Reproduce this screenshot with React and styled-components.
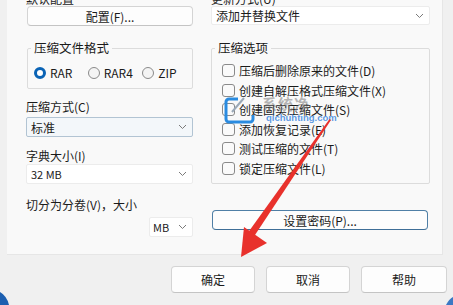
import React from "react";
import styled, { createGlobalStyle } from "styled-components";

const Global = createGlobalStyle`
  html, body { margin: 0; padding: 0; background: #f0f0f0; }
  body { font-family: "Noto Sans CJK SC", "Noto Sans", sans-serif; font-size: 12px; color: #1b1b1b; }
  * { box-sizing: border-box; }
`;

const Screen = styled.div`
  position: relative;
  width: 453px;
  height: 305px;
  overflow: hidden;
  background: #f0f0f0;
`;

const Panel = styled.div`
  margin-left: 7px;
  width: 436px;
  height: 255px;
  background: #f9f9f9;
  border-right: 1px solid #e6e6e6;
  border-bottom: 1px solid #e6e6e6;
  padding: 0 12px 0 19px;
  display: flex;
  gap: 18px;
`;

const Column = styled.div`
  width: ${(p) => p.$w}px;
  display: flex;
  flex-direction: column;
`;

const Label = styled.div`
  height: ${(p) => p.$h || 14}px;
  line-height: ${(p) => p.$h || 14}px;
  margin-top: ${(p) => p.$mt || 0}px;
  margin-left: ${(p) => p.$ml || 0}px;
  white-space: nowrap;
  font-size: 12px;
`;

const Button = styled.div`
  height: ${(p) => p.$h || 20}px;
  margin-top: ${(p) => p.$mt || 0}px;
  width: ${(p) => (p.$w ? p.$w + "px" : "auto")};
  background: #fdfdfd;
  border: 1px solid ${(p) => (p.$focus ? "#4f7fa6" : "#d4d4d4")};
  border-bottom-color: ${(p) => (p.$focus ? "#3f6f98" : "#c4c4c4")};
  border-radius: 4px;
  display: flex;
  align-items: center;
  justify-content: center;
  font-size: 12px;
  white-space: nowrap;
`;

const Select = styled.div`
  height: 20px;
  margin-top: ${(p) => p.$mt || 0}px;
  margin-left: ${(p) => p.$ml || 0}px;
  width: ${(p) => (p.$w ? p.$w + "px" : "auto")};
  background: ${(p) => (p.$hover ? "#f3f7fa" : "#ffffff")};
  border: 1px solid ${(p) => (p.$hover ? "#b2c4d3" : "#ececec")};
  border-radius: 2px;
  display: flex;
  align-items: center;
  justify-content: space-between;
  padding: 0 5px 0 ${(p) => (p.$pl ? p.$pl : 4)}px;
  font-size: ${(p) => (p.$small ? 11 : 12)}px;
  align-self: ${(p) => (p.$end ? "flex-end" : "stretch")};
`;

const Chevron = () => (
  <svg width="9" height="6" viewBox="0 0 9 6">
    <path d="M1 1 L4.5 4.5 L8 1" fill="none" stroke="#7a7a7a" strokeWidth="1" />
  </svg>
);

const Group = styled.div`
  margin-top: ${(p) => p.$mt || 0}px;
  height: ${(p) => p.$h}px;
  border: 1px solid #dcdcdc;
  border-radius: 2px;
  display: flex;
  flex-direction: column;
`;

const Legend = styled.div`
  align-self: flex-start;
  margin: -8px 0 0 3px;
  padding: 0 3px;
  height: 14px;
  line-height: 14px;
  background: #f9f9f9;
  font-size: 12.5px;
`;

const RadioRow = styled.div`
  display: flex;
  align-items: center;
  margin-top: 9px;
  padding-left: 6px;
`;

const RadioItem = styled.div`
  display: flex;
  align-items: center;
  gap: 4px;
  width: ${(p) => p.$w}px;
  font-size: 12px;
`;

const RadioDot = styled.span`
  width: 12px;
  height: 12px;
  border-radius: 50%;
  flex: none;
  background: ${(p) => (p.$on ? "#fff" : "#f4f4f4")};
  border: ${(p) => (p.$on ? "3.5px solid #0a63b5" : "1px solid #8a8a8a")};
`;

const CheckList = styled.div`
  display: flex;
  flex-direction: column;
  margin-top: 6px;
  padding-left: 10px;
`;

const CheckRow = styled.div`
  display: flex;
  align-items: center;
  height: 19.5px;
  gap: 4px;
  font-size: 12px;
  white-space: nowrap;
`;

const Box = styled.span`
  width: 13px;
  height: 13px;
  flex: none;
  border: 1px solid #8a8a8a;
  border-radius: 3px;
  background: #fafafa;
`;

const Footer = styled.div`
  display: flex;
  justify-content: flex-end;
  gap: 11px;
  padding: 11px 6px 0 0;
`;

const Overlay = styled.svg`
  position: absolute;
  left: 0;
  top: 0;
  pointer-events: none;
`;

const Watermark = styled.div`
  position: absolute;
  left: 224px;
  top: 96px;
  display: flex;
  align-items: flex-start;
  gap: 4px;
  pointer-events: none;
`;

const WmText = styled.div`
  display: flex;
  flex-direction: column;
`;

const WmCn = styled.div`
  font-size: 15px;
  line-height: 16px;
  color: rgba(110, 110, 110, 0.5);
  font-weight: bold;
  letter-spacing: 1px;
`;

const WmEn = styled.div`
  font-family: "Liberation Sans", Arial, sans-serif;
  font-size: 9.5px;
  line-height: 11px;
  font-weight: bold;
  color: rgba(30, 120, 220, 0.75);
  margin-left: 4px;
`;

const options = [
  "压缩后删除原来的文件(D)",
  "创建自解压格式压缩文件(X)",
  "创建固实压缩文件(S)",
  "添加恢复记录(E)",
  "测试压缩的文件(T)",
  "锁定压缩文件(L)",
];

export default function App() {
  return (
    <>
      <Global />
      <Screen>
        <Panel>
          <Column $w={167}>
            <Label $mt={-8}>默认配置</Label>
            <Button $h={20} style={{ marginLeft: 1 }}>配置(F)...</Button>
            <Group $mt={22} $h={41} style={{ marginLeft: 1 }}>
              <Legend>压缩文件格式</Legend>
              <RadioRow>
                <RadioItem $w={54}><RadioDot $on />RAR</RadioItem>
                <RadioItem $w={55}><RadioDot />RAR4</RadioItem>
                <RadioItem $w={50}><RadioDot />ZIP</RadioItem>
              </RadioRow>
            </Group>
            <Label $mt={11}>压缩方式(C)</Label>
            <Select $mt={3} $hover>
              <span>标准</span>
              <Chevron />
            </Select>
            <Label $mt={12} $h={14}>字典大小(I)</Label>
            <Select $mt={1} $small>
              <span>32 MB</span>
              <Chevron />
            </Select>
            <Label $mt={14}>切分为分卷(V)，大小</Label>
            <Select $mt={5} $w={44} $small $end $pl={3}>
              <span>MB</span>
              <Chevron />
            </Select>
          </Column>
          <Column $w={219}>
            <Label $mt={-8}>更新方式(U)</Label>
            <Select $mt={0} style={{ height: 19 }}>
              <span>添加并替换文件</span>
              <Chevron />
            </Select>
            <Group $mt={23} $h={136}>
              <Legend>压缩选项</Legend>
              <CheckList>
                {options.map((o) => (
                  <CheckRow key={o}>
                    <Box />
                    {o}
                  </CheckRow>
                ))}
              </CheckList>
            </Group>
            <Button $mt={26} $focus style={{ marginLeft: 1, marginRight: 2 }}>设置密码(P)...</Button>
          </Column>
        </Panel>
        <Footer>
          <Button $w={84} $h={27}>确定</Button>
          <Button $w={84} $h={27}>取消</Button>
          <Button $w={86} $h={27}>帮助</Button>
        </Footer>

        <Watermark>
          <svg width="34" height="28" viewBox="0 0 34 28">
            <path d="M14 3 H5 a3 3 0 0 0 -3 3 V23 a3 3 0 0 0 3 3 H26 a3 3 0 0 0 3 -3 V19" fill="none" stroke="#2a8be0" strokeWidth="3" />
            <path d="M8 16 L20 2" fill="none" stroke="#9aa9b8" strokeWidth="2" />
          </svg>
          <WmText>
            <WmCn>系统净</WmCn>
            <WmEn>qichuhting.com</WmEn>
          </WmText>
        </Watermark>

        <Overlay width="453" height="305" viewBox="0 0 453 305">
          <polygon points="329.5,119 331,120 253,238 247,234" fill="#e8312c" />
          <polygon points="241,257 244,227 267,243" fill="#e8312c" />
          <path d="M0 292 Q7 296 9 305 L0 305 Z" fill="#1d5fb0" />
          <path d="M446 305 Q449 299 453 297 L453 305 Z" fill="#3b78c4" />
        </Overlay>
      </Screen>
    </>
  );
}
